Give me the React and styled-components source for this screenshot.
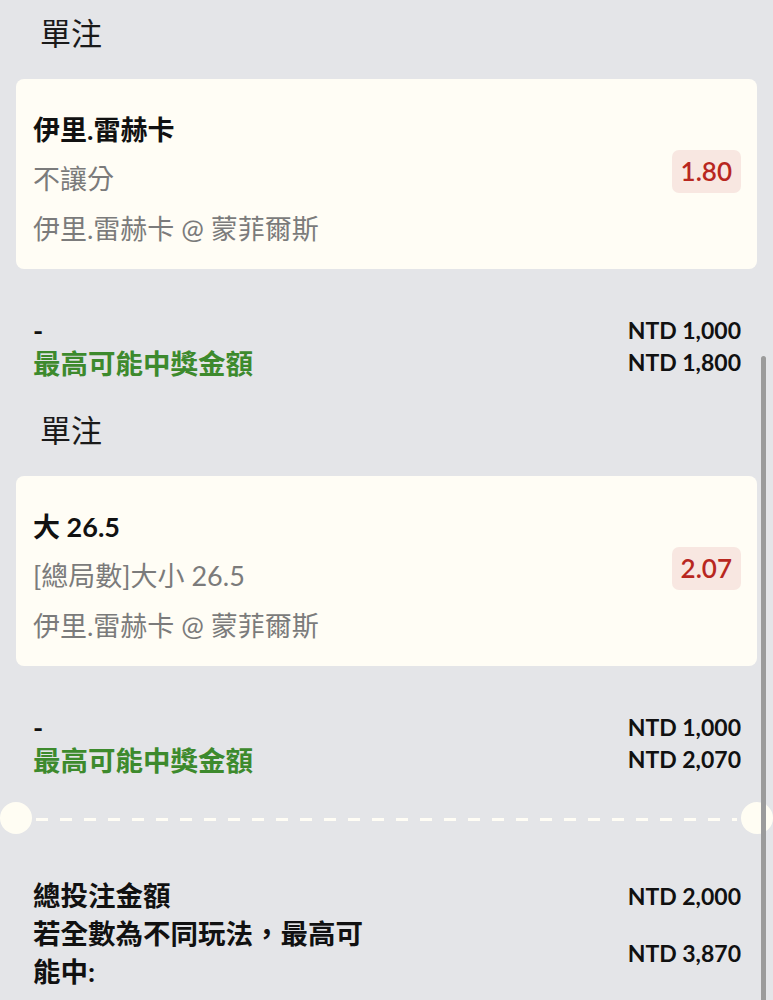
import React from "react";
import styled, { createGlobalStyle } from "styled-components";

const GlobalStyle = createGlobalStyle`
  html, body {
    margin: 0;
    padding: 0;
    background: #e4e5e8;
  }
  body {
    font-family: "Lato", "Noto Sans CJK TC", sans-serif;
    color: #111;
  }
  * { box-sizing: border-box; }
`;

const bets = [
  {
    title: "伊里.雷赫卡",
    market: "不讓分",
    match: "伊里.雷赫卡 @ 蒙菲爾斯",
    odds: "1.80",
    stake: "NTD 1,000",
    payout: "NTD 1,800",
  },
  {
    title: "大 26.5",
    market: "[總局數]大小 26.5",
    match: "伊里.雷赫卡 @ 蒙菲爾斯",
    odds: "2.07",
    stake: "NTD 1,000",
    payout: "NTD 2,070",
  },
];

const App = () => {
  return (
    <>
      <GlobalStyle />
      <Page>
        {bets.map((bet, i) => (
          <Section key={i}>
            <SectionTitle>單注</SectionTitle>
            <BetCard>
              <BetInfo>
                <BetTitle>{bet.title}</BetTitle>
                <BetLine>{bet.market}</BetLine>
                <BetLine>{bet.match}</BetLine>
              </BetInfo>
              <OddsBadge>{bet.odds}</OddsBadge>
            </BetCard>
            <Summary>
              <SummaryRow>
                <SummaryLabel>-</SummaryLabel>
                <Amount>{bet.stake}</Amount>
              </SummaryRow>
              <SummaryRow>
                <SummaryLabel $green>最高可能中獎金額</SummaryLabel>
                <Amount>{bet.payout}</Amount>
              </SummaryRow>
            </Summary>
          </Section>
        ))}

        <Divider>
          <Notch />
          <Dashes />
          <Notch />
        </Divider>

        <Totals>
          <TotalRow>
            <TotalLabel>總投注金額</TotalLabel>
            <Amount>NTD 2,000</Amount>
          </TotalRow>
          <TotalRow>
            <TotalLabel>若全數為不同玩法，最高可能中:</TotalLabel>
            <Amount>NTD 3,870</Amount>
          </TotalRow>
        </Totals>

        <ScrollThumb />
      </Page>
    </>
  );
};

const Page = styled.div`
  position: relative;
  width: 773px;
  min-height: 1000px;
  padding: 15px 16px 20px;
  overflow: hidden;
`;

const Section = styled.section`
  display: flex;
  flex-direction: column;
  & + & {
    margin-top: 34px;
  }
`;

const SectionTitle = styled.h2`
  margin: 0 0 28px;
  padding-left: 24px;
  font-size: 31px;
  line-height: 36px;
  font-weight: 400;
  color: #1a1a1a;
`;

const BetCard = styled.div`
  display: flex;
  align-items: center;
  justify-content: space-between;
  height: 190px;
  padding: 27px 16px 16px 17px;
  background: #fffdf5;
  border-radius: 8px;
`;

const BetInfo = styled.div`
  display: flex;
  flex-direction: column;
  align-self: flex-start;
`;

const BetTitle = styled.div`
  font-size: 27px;
  line-height: 48px;
  font-weight: 700;
  color: #111;
`;

const BetLine = styled.div`
  font-size: 27px;
  line-height: 50px;
  font-weight: 400;
  color: #7b7b7b;
`;

const OddsBadge = styled.div`
  margin-top: -17px;
  padding: 0 9px;
  height: 43px;
  display: flex;
  align-items: center;
  border-radius: 7px;
  background: #f8e7e1;
  color: #b8271f;
  font-size: 26px;
  font-weight: 600;
`;

const Summary = styled.div`
  display: flex;
  flex-direction: column;
  margin-top: 45px;
  padding: 0 16px 0 17px;
`;

const SummaryRow = styled.div`
  display: flex;
  justify-content: space-between;
  align-items: center;
  height: 32px;
`;

const SummaryLabel = styled.span`
  font-size: 27.5px;
  font-weight: 700;
  color: ${(p) => (p.$green ? "#3d8a2d" : "#111")};
`;

const Amount = styled.span`
  font-size: 23px;
  font-weight: 700;
  color: #111;
  white-space: nowrap;
`;

const Divider = styled.div`
  display: flex;
  align-items: center;
  margin: 27px -16px 0;
  height: 32px;
`;

const Notch = styled.div`
  width: 32px;
  height: 32px;
  border-radius: 50%;
  background: #fffdf3;
  flex-shrink: 0;
`;

const Dashes = styled.div`
  flex: 1;
  height: 3px;
  margin: 3px 4px 0;
  background: repeating-linear-gradient(
    to right,
    #fffdf5 0 12px,
    transparent 12px 24px
  );
`;

const Totals = styled.div`
  display: flex;
  flex-direction: column;
  margin-top: 43px;
  padding: 0 16px 0 17px;
`;

const TotalRow = styled.div`
  display: flex;
  justify-content: space-between;
  align-items: center;
`;

const TotalLabel = styled.div`
  max-width: 345px;
  font-size: 27.5px;
  line-height: 38px;
  font-weight: 700;
  color: #111;
`;

const ScrollThumb = styled.div`
  position: absolute;
  top: 356px;
  right: 7px;
  width: 5px;
  height: 700px;
  border-radius: 3px;
  background: #9b9b9b;
`;

export default App;
